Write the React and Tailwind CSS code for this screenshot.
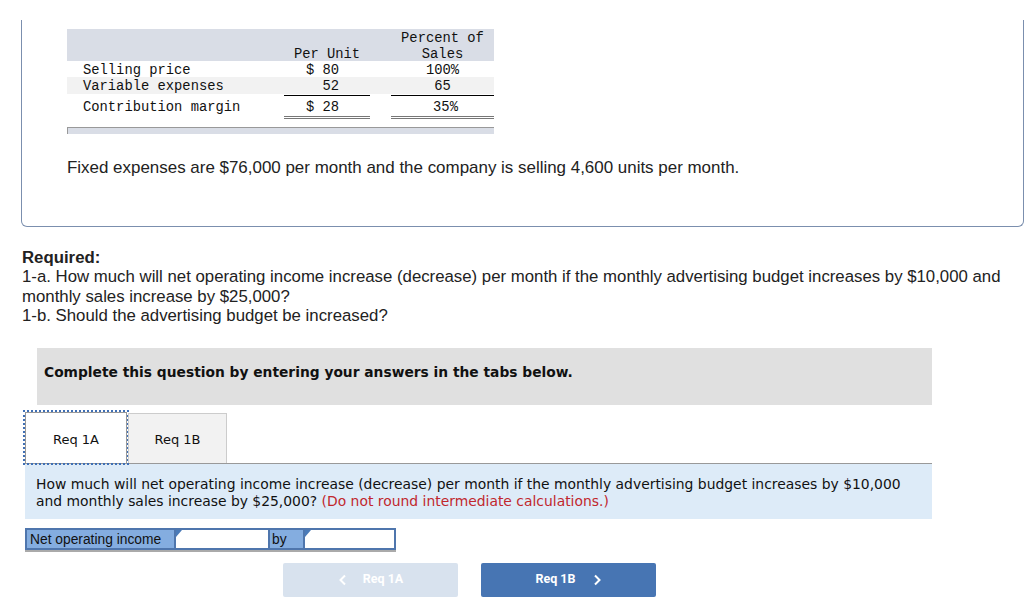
import React from "react";

const mono = { fontFamily: '"Liberation Mono", "Courier New", monospace' };
const sans = { fontFamily: '"Liberation Sans", Arial, sans-serif' };
const verdana = { fontFamily: '"DejaVu Sans", Verdana, sans-serif' };

const cols = "grid grid-cols-[217px_86px_21px_103px]";

const Table = () => {
  return (
    <div className="w-[427px] text-[13.8px] leading-[16px] text-[#111]" style={mono}>
      <div className={cols + " h-[32px] bg-[#d9dde6]"}>
        <div />
        <div className="pt-[18px] text-center">Per Unit</div>
        <div />
        <div className="pt-[2px] text-center">
          Percent of
          <br />
          Sales
        </div>
      </div>
      <div className={cols + " h-[16px] bg-white"}>
        <div className="pt-[2px] pl-[16px]">Selling price</div>
        <div className="pt-[2px] flex justify-between pl-[22px] pr-[31px]">
          <span>$</span>
          <span>80</span>
        </div>
        <div />
        <div className="pt-[2px] text-center">100%</div>
      </div>
      <div className={cols + " h-[17px] bg-[#f2f2f2]"}>
        <div className="pt-[2px] pl-[16px]">Variable expenses</div>
        <div className="pt-[2px] text-right pr-[31px] border-b border-black">52</div>
        <div />
        <div className="pt-[2px] text-center border-b border-black">65</div>
      </div>
      <div className={cols + " h-[25px]"}>
        <div className="pt-[6px] pl-[16px]">Contribution margin</div>
        <div className="pt-[6px] flex justify-between pl-[22px] pr-[31px] border-b-[3px] border-double border-[#777]">
          <span>$</span>
          <span>28</span>
        </div>
        <div />
        <div className="pt-[6px] text-center pl-[6px] border-b-[3px] border-double border-[#777]">35%</div>
      </div>
      <div className="mt-[8px] h-[7px] bg-[#d9dde6] border-t border-l border-[#999]" />
    </div>
  );
};

const Chevron = ({ dir }) => (
  <svg width="10" height="12" viewBox="0 0 10 12" fill="none" stroke="currentColor" strokeWidth="2">
    {dir === "left" ? <path d="M7 1.5 L2.5 6 L7 10.5" /> : <path d="M3 1.5 L7.5 6 L3 10.5" />}
  </svg>
);

const InputCell = ({ w }) => (
  <div className={"relative h-full bg-white border-2 border-[#4f76ad] " + w}>
    <span className="absolute left-0 top-0 w-0 h-0 border-t-[7px] border-t-[#4a7ab8] border-r-[6px] border-r-transparent" />
  </div>
);

export default function App() {
  return (
    <div className="w-[1024px] h-[608px] overflow-hidden bg-white">
      <div className="pt-[20px] pl-[21px]">
        <div className="h-[207px] border-l border-b border-r border-[#7b8fae] rounded-b-[6px] pl-[45px] pt-[9px]">
          <Table />
          <p className="mt-[24px] text-[16.95px] leading-[20px] text-[#222]" style={sans}>
            Fixed expenses are $76,000 per month and the company is selling 4,600 units per month.
          </p>
        </div>
      </div>

      <div className="pl-[22px] mt-[21px] text-[16.8px] leading-[19.4px] text-[#222]" style={sans}>
        <p className="font-bold">Required:</p>
        <p>
          1-a. How much will net operating income increase (decrease) per month if the monthly advertising budget increases by $10,000 and
          <br />
          monthly sales increase by $25,000?
        </p>
        <p>1-b. Should the advertising budget be increased?</p>
      </div>

      <div
        className="ml-[37px] mt-[22px] w-[895px] h-[57px] bg-[#e0e0e0] pl-[7px] pt-[16px] text-[13.8px] leading-[16px] font-bold text-[#111]"
        style={verdana}
      >
        Complete this question by entering your answers in the tabs below.
      </div>

      <div className="ml-[25px] w-[907px] mt-[8px]" style={verdana}>
        <div className="flex items-end h-[51px] border-b border-[#999]">
          <div className="w-[102px] h-[51px] pt-[5px] flex items-center justify-center bg-white border border-b-0 border-[#999] outline-2 outline-dotted outline-[#3f6fb5] text-[13px] text-[#111]">
            Req 1A
          </div>
          <div className="w-[99px] h-[50px] ml-[1px] pt-[4px] flex items-center justify-center bg-[#f2f2f2] border border-b-0 border-[#ccc] text-[13px] text-[#111]">
            Req 1B
          </div>
        </div>
        <div className="bg-[#ddebf8] h-[55px] pl-[11px] pt-[12px] text-[13.9px] leading-[17px] text-[#111]">
          How much will net operating income increase (decrease) per month if the monthly advertising budget increases by $10,000
          <br />
          and monthly sales increase by $25,000? <span className="text-[#c1272d]">(Do not round intermediate calculations.)</span>
        </div>

        <div className="mt-[9px] flex h-[24px] w-[371px] border-b-2 border-[#aaa]" style={sans}>
          <div className="w-[149px] h-full bg-[#84ade0] border-2 border-r-0 border-[#4f76ad] pl-[3px] text-[13.8px] leading-[19px] text-[#111]">
            Net operating income
          </div>
          <InputCell w="w-[96px]" />
          <div className="w-[33px] h-full bg-[#84ade0] border-y-2 border-[#4f76ad] pl-[2px] text-[13.8px] leading-[19px] text-[#111]">
            by
          </div>
          <InputCell w="w-[93px]" />
        </div>

        <div className="mt-[11px] ml-[258px] flex gap-[23px]" style={{ fontFamily: 'Roboto, "Liberation Sans", sans-serif' }}>
          <div className="w-[175px] h-[34px] rounded-[2px] bg-[#d8e2ee] text-white flex items-center justify-center gap-[15px] text-[12.5px] font-bold">
            <Chevron dir="left" />
            <span>Req 1A</span>
          </div>
          <div className="w-[175px] h-[34px] rounded-[2px] bg-[#4775b3] text-white flex items-center justify-center gap-[16px] text-[12.5px] font-bold">
            <span>Req 1B</span>
            <Chevron dir="right" />
          </div>
        </div>
      </div>
    </div>
  );
}
